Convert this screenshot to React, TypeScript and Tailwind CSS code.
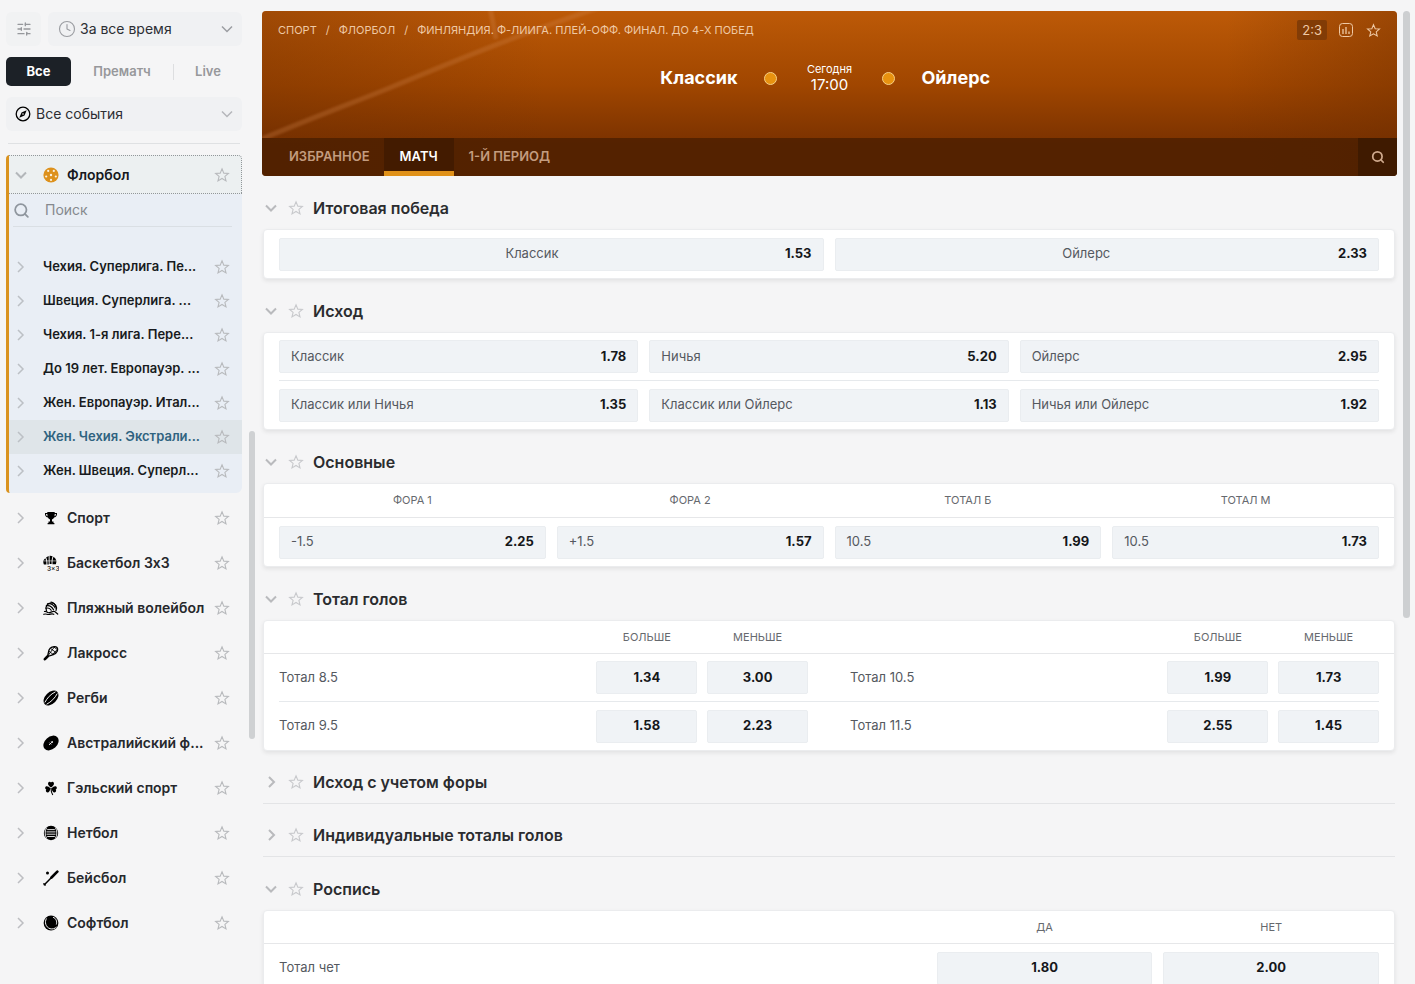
import type { ReactNode } from "react";
import { Clock, Search, SlidersHorizontal } from "lucide-react";

interface Sport {
  name: string;
  icon: ReactNode;
}

interface Offer {
  label: string;
  odds: string;
}

interface TableRow {
  label: string;
  odds: string[];
}

const svgProps = {
  viewBox: "0 0 16 16",
  width: 16,
  height: 16,
  fill: "currentColor",
  "aria-hidden": true,
  className: "shrink-0",
};

const TrophyIcon = (
  <svg {...svgProps}>
    <path d="M4.3 2h7.4v.9H14c.2 2.5-.7 4-2.9 4.500C10.500 8.500 9.800 9 9 9.300v2.200h1.500V13h.9v1.200H4.600V13h.9v-1.500H7V9.300C6.200 9 5.500 8.500 4.900 7.400 2.700 6.900 1.800 5.400 2 2.900h2.300zm0 1.900H3c.1 1.200.5 1.900 1.500 2.300zm7.400 0-.2 2.300c1-.4 1.400-1.100 1.500-2.300z" />
  </svg>
);

const BasketballIcon = (
  <svg {...svgProps}>
    <path d="M5.700 1v8.500H4.400c.1-2.900-.2-5-1.300-6.900A6 6 0 0 1 5.700 1zM6.600.8c1.200-.1 2.200.1 3 .5C8.700 3.500 8.500 6 8.600 9H6.600zM2.300 3.300c.9 1.600 1.200 3.500 1.100 6.200H.9A6.500 6.500 0 0 1 .3 6.300C.5 5.200 1.200 4.100 2.300 3.300zM10.500 1.800a6.500 6.500 0 0 1 2.400 7.500H9.500c-.1-3 .1-5.500 1-7.500z" />
    <path d="M.5 5.900h12.500" stroke="#f5f5f6" strokeWidth=".6" />
    <text x="4" y="15.500" fontSize="6.500" fontWeight="500" fontFamily="Inter, sans-serif">
      3×3
    </text>
  </svg>
);

const BeachVolleyIcon = (
  <svg {...svgProps} fill="none" stroke="currentColor" strokeWidth="1.200" strokeLinecap="round">
    <path d="M3.500 10.500A5.300 5.300 0 1 1 13 10.500" />
    <path d="M4.500 3.800c3-.8 5.800.6 7.800 4.200M3.300 5.800c3-.7 5.500.6 7.200 4M3.200 8.300c2-.7 4 .2 5 2M8 2c2.200.4 3.800 1.800 4.700 4.500" />
    <path d="M1.500 11.500c1.500-.6 2.200.4 3.200 1 2 1.200 4.500-2 7-1l3 2.500M.8 14.300c2.200-.9 3 .3 5 .2 1.900-.1 2.800-1.500 5-.2" />
  </svg>
);

const LacrosseIcon = (
  <svg {...svgProps} fill="none" stroke="currentColor" strokeWidth="1.300" strokeLinecap="round">
    <path d="M1.900 14.200l2.600-2.700" strokeWidth="2.600" />
    <path d="M4.500 11.500 6 5C7.200 2.500 10.500 1 13 1.800c1.800.6 2 2.600 1.200 4.400-.8 1.700-2.300 2.800-4 3.400z" />
    <path d="M6.300 6.500l4 3M8 3.800l5 3.700M10.800 2l3.500 2.500M11.500 1.800 5.500 10M14.300 4.500 9 10" strokeWidth=".9" />
  </svg>
);

const RugbyIcon = (
  <svg {...svgProps}>
    <ellipse cx="8" cy="8" rx="8.800" ry="5.800" transform="rotate(-45 8 8)" />
    <path d="M1.800 12.500C4.200 8 7.500 4.200 12.500 1.800M3.500 14.300C8 12 12 8 14.300 3.500" fill="none" stroke="#f5f5f6" strokeWidth="1" />
  </svg>
);

const FootyIcon = (
  <svg {...svgProps}>
    <ellipse cx="8" cy="8" rx="8.600" ry="6.200" transform="rotate(-42 8 8)" />
    <path d="M6 10l4-3.800M6.500 7.700l1.700 1.700M8.100 6.300l1.700 1.700" fill="none" stroke="#f5f5f6" strokeWidth=".9" />
  </svg>
);

const CloverIcon = (
  <svg {...svgProps}>
    <path d="M8 7.500C6 6 4.600 4.600 5.100 3 5.600 1.600 7.300 1.500 8 2.600c.7-1.100 2.400-1 2.900.4.500 1.600-.9 3-2.900 4.500z" />
    <path d="M7.500 8.200c-.5 2.400-1.400 4.300-3.100 4.200-1.500-.2-2-1.800-1.100-2.800-1.200-.4-1.600-2-.5-3 1.300-1 3 .1 4.700 1.600zM8.500 8.200c.5 2.400 1.400 4.300 3.100 4.200 1.500-.2 2-1.800 1.100-2.800 1.200-.4 1.600-2 .5-3-1.300-1-3 .1-4.700 1.600z" />
    <path d="M8 8c0 2.800.3 4.800 1.800 7" fill="none" stroke="currentColor" strokeWidth="1.100" />
  </svg>
);

const NetballIcon = (
  <svg {...svgProps}>
    <circle cx="8" cy="8" r="7.200" />
    <path d="M4.200 4.600h7.600M3.500 6.900h9M3.500 9.200h9M4.200 11.500h7.600M3.600 2.800C1.700 5.500 1.700 10.500 3.600 13.200M12.400 2.800c1.900 2.700 1.900 7.700 0 10.400" fill="none" stroke="#f5f5f6" strokeWidth=".9" />
  </svg>
);

const BaseballIcon = (
  <svg {...svgProps} fill="none" stroke="currentColor" strokeLinecap="round">
    <path d="M1.300 14.700 14.500 1.500" strokeWidth="1.500" />
    <path d="M8.500 7.500 14.300 1.700" strokeWidth="2.600" />
    <path d="M.9 13.800l1.300 1.300" strokeWidth="1.400" />
    <circle cx="4.500" cy="3" r="1.500" fill="currentColor" stroke="none" />
  </svg>
);

const SoftballIcon = (
  <svg {...svgProps}>
    <circle cx="8" cy="8" r="7.400" />
    <path d="M3.500 3.500C1.400 7 2.500 12 7 13.700c2.500.7 5-.1 6.500-1.700M10 2.200c3 1.100 4.300 4.200 3.300 7.300" fill="none" stroke="#f5f5f6" strokeWidth="1" />
  </svg>
);

const LEAGUES = [
  "Чехия. Суперлига. Пе...",
  "Швеция. Суперлига. ...",
  "Чехия. 1-я лига. Пере...",
  "До 19 лет. Европауэр. ...",
  "Жен. Европауэр. Итал...",
  "Жен. Чехия. Экстрали...",
  "Жен. Швеция. Суперл...",
];

const SELECTED_LEAGUE = LEAGUES[5];

const SPORTS: Sport[] = [
  { name: "Спорт", icon: TrophyIcon },
  { name: "Баскетбол 3х3", icon: BasketballIcon },
  { name: "Пляжный волейбол", icon: BeachVolleyIcon },
  { name: "Лакросс", icon: LacrosseIcon },
  { name: "Регби", icon: RugbyIcon },
  { name: "Австралийский ф...", icon: FootyIcon },
  { name: "Гэльский спорт", icon: CloverIcon },
  { name: "Нетбол", icon: NetballIcon },
  { name: "Бейсбол", icon: BaseballIcon },
  { name: "Софтбол", icon: SoftballIcon },
];

const OUTCOMES: Offer[][] = [
  [
    { label: "Классик", odds: "1.78" },
    { label: "Ничья", odds: "5.20" },
    { label: "Ойлерс", odds: "2.95" },
  ],
  [
    { label: "Классик или Ничья", odds: "1.35" },
    { label: "Классик или Ойлерс", odds: "1.13" },
    { label: "Ничья или Ойлерс", odds: "1.92" },
  ],
];

const MAIN_COLUMNS = ["Фора 1", "Фора 2", "Тотал Б", "Тотал М"];

const MAIN_OFFERS: Offer[] = [
  { label: "-1.5", odds: "2.25" },
  { label: "+1.5", odds: "1.57" },
  { label: "10.5", odds: "1.99" },
  { label: "10.5", odds: "1.73" },
];

const TOTALS: TableRow[][] = [
  [
    { label: "Тотал 8.5", odds: ["1.34", "3.00"] },
    { label: "Тотал 10.5", odds: ["1.99", "1.73"] },
  ],
  [
    { label: "Тотал 9.5", odds: ["1.58", "2.23"] },
    { label: "Тотал 11.5", odds: ["2.55", "1.45"] },
  ],
];

function Chevron({ open = false, bold = false }: { open?: boolean; bold?: boolean }) {
  return (
    <svg viewBox="0 0 14 14" width="14" height="14" fill="none" stroke="currentColor" strokeWidth={bold ? 2 : 1.5} aria-hidden="true" className="shrink-0">
      <path d={open ? "M2 4.500l5 5 5-5" : "M5 2l5 5-5 5"} />
    </svg>
  );
}

function StarIcon({ size = 16 }: { size?: number }) {
  return (
    <svg viewBox="0 0 16 16" width={size} height={size} fill="none" stroke="currentColor" strokeWidth="1.100" aria-hidden="true">
      <path d="M8 1.800l1.800 4.300 4.600.3-3.500 3 1.100 4.500L8 11.500l-4 2.400 1.100-4.500-3.500-3 4.600-.3z" />
    </svg>
  );
}

function StarButton({ name }: { name: string }) {
  return (
    <button aria-label={`В избранное: ${name}`} className="shrink-0 text-[#b8babd] cursor-pointer">
      <StarIcon />
    </button>
  );
}

function CompassIcon() {
  return (
    <svg viewBox="0 0 16 16" width={16} height={16} fill="none" stroke="#000" strokeWidth="1.300" aria-hidden="true" className="shrink-0">
      <circle cx="8" cy="8" r="6.800" />
      <path d="M11.700 4.300 9.500 9.500 4.300 11.700 6.500 6.500z" fill="#000" stroke="none" />
      <circle cx="8" cy="8" r=".8" fill="#fff" stroke="none" />
    </svg>
  );
}

function FloorballIcon() {
  return (
    <svg viewBox="0 0 16 16" width={16} height={16} aria-hidden="true" className="shrink-0">
      <circle cx="8" cy="8" r="7.600" fill="#dd911c" />
      <g fill="#fbf3e2">
        <circle cx="8" cy="8" r="1.200" />
        <circle cx="5.200" cy="3.900" r="1.100" />
        <circle cx="10.800" cy="3.900" r="1.100" />
        <circle cx="3.200" cy="9.500" r="1.100" />
        <circle cx="12.800" cy="9.500" r="1.100" />
        <circle cx="8" cy="12.900" r="1.100" />
      </g>
    </svg>
  );
}

function Sidebar() {
  return (
    <aside className="w-[242px] shrink-0 pl-1.5 pt-3 text-[13px]">
      <div className="flex gap-[7px]">
        <button aria-label="Фильтры" className="flex h-[34px] w-[35px] items-center justify-center rounded-md bg-[#f1f2f3] text-[#96989c]">
          <SlidersHorizontal size={16} strokeWidth={2} />
        </button>
        <label className="flex h-[34px] flex-1 items-center gap-1 rounded-md bg-[#f0f1f3] pl-2.5 pr-2 text-[#9b9da2]">
          <Clock size={18} strokeWidth={1.500} className="shrink-0" />
          <select aria-label="Период" className="min-w-0 flex-1 appearance-none bg-transparent text-sm text-[#2c2e33]">
            <option>За все время</option>
          </select>
          <Chevron open />
        </label>
      </div>

      <div className="mt-[11px] flex items-center font-semibold text-[#97989b]">
        <button className="h-[29px] w-[65px] rounded-[5px] bg-[#1c2127] font-bold text-white">Все</button>
        <button className="h-[29px] flex-1">Прематч</button>
        <span className="h-4 w-px bg-[#dddee0]" />
        <button className="h-[29px] w-[68px]">Live</button>
      </div>

      <label className="mt-[11px] flex h-[34px] items-center gap-[5px] rounded-md bg-[#f0f1f3] pl-[9px] pr-2 text-[#b4b6ba]">
        <CompassIcon />
        <select aria-label="События" className="min-w-0 flex-1 appearance-none bg-transparent text-sm text-[#2c2e33]">
          <option>Все события</option>
        </select>
        <Chevron open />
      </label>

      <hr className="mx-0.5 mt-3 mb-[11px] border-[#dfe1e3]" />

      <section className="rounded-r-md rounded-l-sm border-l-3 border-[#da931f] bg-[#e9eef5] pb-[5px]">
        <div className="flex h-[39px] items-center rounded-tr border border-l-0 border-dotted border-[#92979a] bg-[#ecf0f1] pl-[5px] pr-[11px] text-[#b3b7ba]">
          <Chevron open bold />
          <span className="ml-[15px] flex flex-1 items-center gap-2 text-sm font-semibold text-[#17191d]">
            <FloorballIcon />
            Флорбол
          </span>
          <StarButton name="Флорбол" />
        </div>
        <label className="mr-2.5 ml-1 flex h-[33px] items-center gap-[15px] border-b border-[#dadfe4] text-[#8f969e]">
          <Search size={17} strokeWidth={2.500} className="shrink-0" />
          <input aria-label="Поиск" placeholder="Поиск" className="w-full min-w-0 bg-transparent text-sm outline-none placeholder:text-[#85898e]" />
        </label>
        <ul className="mt-[23px]">
          {LEAGUES.map((league) => {
            const selected = league === SELECTED_LEAGUE;
            return (
              <li key={league} className={`flex h-[34px] items-center pl-1 pr-3 text-[#bcc0c5] ${selected ? "bg-[#dfe5e9]" : ""}`}>
                <Chevron />
                <a href="#" className={`ml-4 flex-1 text-[13px] font-semibold whitespace-nowrap ${selected ? "text-[#306380]" : "text-[#181b20]"}`}>
                  {league}
                </a>
                <StarButton name={league} />
              </li>
            );
          })}
        </ul>
      </section>

      <ul className="mt-0.5">
        {SPORTS.map((sport) => (
          <li key={sport.name} className="flex h-[45px] items-center pl-[7px] pr-3 text-[#bdbec2]">
            <Chevron />
            <a href="#" className="ml-4 flex flex-1 items-center gap-2 text-sm font-semibold whitespace-nowrap text-[#26282c]">
              <span className="shrink-0 text-black">{sport.icon}</span>
              {sport.name}
            </a>
            <StarButton name={sport.name} />
          </li>
        ))}
      </ul>
    </aside>
  );
}

function MatchHeader() {
  return (
    <header className="relative overflow-hidden rounded bg-gradient-to-b from-[#bd5a08] via-[#a04600] via-45% to-[#7b3200] to-80% text-white">
      <div className="absolute inset-0 bg-[linear-gradient(90deg,#6b2c0059,transparent_25%,transparent_85%,#6b2c0066)]" />
      <svg viewBox="0 0 340 127" width="340" height="127" aria-hidden="true" className="absolute left-0 top-0">
        <path d="M0 128C50 107 85 94 125 78C190 51 260 22 345-6" fill="none" stroke="#d58a50" strokeOpacity=".28" strokeWidth="5" className="blur-[1px]" />
        <path d="M228-4l6 32" fill="none" stroke="#d58a50" strokeOpacity=".28" strokeWidth="5" className="blur-[1px]" />
      </svg>

      <div className="relative">
        <div className="flex h-[38px] items-center justify-between px-4 text-[#efc9a5]">
          <nav className="flex gap-[9px] text-[11px] uppercase">
            <a href="#">Спорт</a>
            <span>/</span>
            <a href="#">Флорбол</a>
            <span>/</span>
            <a href="#">Финляндия. Ф-лиига. Плей-офф. Финал. До 4-х побед</a>
          </nav>
          <div className="flex items-center">
            <span className="rounded-xs bg-[#823c06] px-[5px] text-[13px] leading-5">2:3</span>
            <button aria-label="Статистика" className="ml-[11px]">
              <svg viewBox="0 0 16 16" width="16" height="16" fill="none" stroke="currentColor" strokeWidth="1" aria-hidden="true">
                <rect x="1.500" y="1.500" width="13" height="13" rx="3" />
                <path d="M5 7v5M8 5v7M11 9.500V12" strokeWidth="1.300" />
              </svg>
            </button>
            <button aria-label="В избранное" className="ml-3">
              <StarIcon size={15} />
            </button>
          </div>
        </div>

        <div className="grid h-[89px] grid-cols-[1fr_184px_1fr] pt-[17px]">
          <div className="flex h-6 items-center justify-end text-lg font-bold">Классик</div>
          <div className="flex h-6 items-center justify-between px-[26px]">
            <span className="size-[13px] rounded-full border border-[#f7cf86] bg-[#e8920f]" />
            <div className="pb-0.5 text-center">
              <div className="text-[11px] leading-4">Сегодня</div>
              <div className="text-[15px] leading-4">17:00</div>
            </div>
            <span className="size-[13px] rounded-full border border-[#f7cf86] bg-[#e8920f]" />
          </div>
          <div className="flex h-6 items-center text-lg font-bold">Ойлерс</div>
        </div>

        <div className="flex h-[38px] bg-[#3a1800]/60 pl-3 text-[13px] font-semibold uppercase text-[#c39c7f]">
          <button className="px-3.5 pl-[15px] uppercase">Избранное</button>
          <button className="w-[70px] border-b-5 border-[#e09119] bg-[#431b00] pt-[5px] uppercase text-white">Матч</button>
          <button className="px-[15px] uppercase">1-й период</button>
          <button aria-label="Поиск" className="ml-auto flex w-[39px] items-center justify-center bg-[#3f1a00] text-[#cfa98c]">
            <Search size={14} strokeWidth={3} />
          </button>
        </div>
      </div>
    </header>
  );
}

function Market({ title, children }: { title: string; children?: ReactNode }) {
  return (
    <section className="pt-2.5">
      <div className={`flex h-[43px] items-center ${children ? "" : "border-b border-[#e3e4e6]"}`}>
        <button aria-label="Свернуть или развернуть" className="ml-px text-[#b9babd]">
          <Chevron open={Boolean(children)} bold />
        </button>
        <button aria-label="В избранное" className="ml-2.5 text-[#c8c9cc]">
          <StarIcon />
        </button>
        <h2 className="ml-[9px] text-base font-semibold text-[#2b2c2f]">{title}</h2>
      </div>
      {children && (
        <div className="rounded border border-[#ebecee] bg-white shadow-[0_2px_4px_#00000014]">{children}</div>
      )}
    </section>
  );
}

function OddsButton({ label, odds, centered = false }: { label?: string; odds: string; centered?: boolean }) {
  return (
    <button className="flex h-[33px] w-full items-center rounded-xs border border-[#eaedf0] bg-[#f0f3f6] px-[11px] text-[13px] cursor-pointer">
      {label && <span className={`flex-1 text-[#55595f] ${centered ? "pr-3 text-center" : "text-left"}`}>{label}</span>}
      <span className={`font-bold text-[#15171a] ${label ? "" : "flex-1 text-center"}`}>{odds}</span>
    </button>
  );
}

const headCell = "text-[11px] font-normal uppercase text-[#66696e]";

function Markets() {
  return (
    <>
      <Market title="Итоговая победа">
        <div className="mx-[15px] grid h-12 grid-cols-2 items-center gap-[11px]">
          <OddsButton label="Классик" odds="1.53" centered />
          <OddsButton label="Ойлерс" odds="2.33" centered />
        </div>
      </Market>

      <Market title="Исход">
        <div className="mx-[15px] divide-y divide-[#e6e9ec]">
          {OUTCOMES.map((row) => (
            <div key={row[0].label} className="grid h-12 grid-cols-3 items-center gap-[11px]">
              {row.map((offer) => (
                <OddsButton key={offer.label} {...offer} />
              ))}
            </div>
          ))}
        </div>
      </Market>

      <Market title="Основные">
        <table className="block">
          <thead className="block border-b border-[#e6e7e9] px-[15px]">
            <tr className="grid h-[33px] grid-cols-4 items-center gap-[11px]">
              {MAIN_COLUMNS.map((column) => (
                <th key={column} className={headCell}>{column}</th>
              ))}
            </tr>
          </thead>
          <tbody className="block px-[15px]">
            <tr className="grid h-12 grid-cols-4 items-center gap-[11px]">
              {MAIN_OFFERS.map((offer, i) => (
                <td key={i}>
                  <OddsButton {...offer} />
                </td>
              ))}
            </tr>
          </tbody>
        </table>
      </Market>

      <Market title="Тотал голов">
        <table className="block text-[13px] text-[#55595f]">
          <thead className="block border-b border-[#e6e7e9] px-[15px]">
            <tr className="grid h-8 grid-cols-2 items-center gap-[42px]">
              {[0, 1].map((half) => (
                <th key={half} className={`grid grid-cols-[61fr_20fr_20fr] gap-2.5 text-center ${headCell}`}>
                  <span />
                  <span>Больше</span>
                  <span>Меньше</span>
                </th>
              ))}
            </tr>
          </thead>
          <tbody className="mx-[15px] block divide-y divide-[#e6e9ec]">
            {TOTALS.map((pair) => (
              <tr key={pair[0].label} className="grid h-12 grid-cols-2 items-center gap-[42px]">
                {pair.map((row) => (
                  <td key={row.label} className="grid grid-cols-[61fr_20fr_20fr] items-center gap-2.5">
                    <span>{row.label}</span>
                    {row.odds.map((odds) => (
                      <OddsButton key={odds} odds={odds} />
                    ))}
                  </td>
                ))}
              </tr>
            ))}
          </tbody>
        </table>
      </Market>

      <Market title="Исход с учетом форы" />
      <Market title="Индивидуальные тоталы голов" />

      <Market title="Роспись">
        <table className="block text-[13px] text-[#55595f]">
          <thead className="block border-b border-[#e6e7e9] px-[15px]">
            <tr className="grid h-8 grid-cols-[3fr_1fr_1fr] items-center gap-[11px]">
              <td />
              <th className={headCell}>Да</th>
              <th className={headCell}>Нет</th>
            </tr>
          </thead>
          <tbody className="block px-[15px]">
            <tr className="grid h-12 grid-cols-[3fr_1fr_1fr] items-center gap-[11px]">
              <td>Тотал чет</td>
              <td><OddsButton odds="1.80" /></td>
              <td><OddsButton odds="2.00" /></td>
            </tr>
          </tbody>
        </table>
      </Market>
    </>
  );
}

export default function App() {
  return (
    <div className="flex h-screen overflow-hidden bg-[#f5f5f6] font-['Inter',sans-serif]">
      <Sidebar />
      <div className="ml-[7px] flex w-1.5 shrink-0 flex-col">
        <span className="mt-[431px] h-[308px] rounded-full bg-[#cfd1d3]" />
      </div>
      <main className="ml-[7px] min-w-0 flex-1 pt-[11px]">
        <MatchHeader />
        <div className="pl-px pr-0.5">
          <Markets />
        </div>
      </main>
      <div className="ml-1.5 mr-[5px] flex w-[7px] shrink-0 flex-col pt-[11px]">
        <span className="h-[607px] rounded-full bg-[#cdcfd1]" />
      </div>
    </div>
  );
}
